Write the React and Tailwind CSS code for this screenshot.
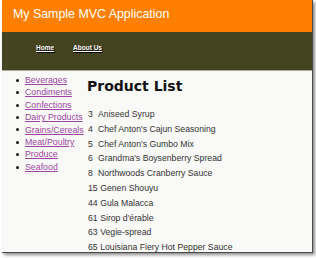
const categories = [
  "Beverages",
  "Condiments",
  "Confections",
  "Dairy Products",
  "Grains/Cereals",
  "Meat/Poultry",
  "Produce",
  "Seafood",
];

const products = [
  [3, "Aniseed Syrup"],
  [4, "Chef Anton's Cajun Seasoning"],
  [5, "Chef Anton's Gumbo Mix"],
  [6, "Grandma's Boysenberry Spread"],
  [8, "Northwoods Cranberry Sauce"],
  [15, "Genen Shouyu"],
  [44, "Gula Malacca"],
  [61, "Sirop d'érable"],
  [63, "Vegie-spread"],
  [65, "Louisiana Fiery Hot Pepper Sauce"],
];

export default function App() {
  return (
    <div className="w-[316px] h-[258px] bg-white overflow-hidden font-['Liberation_Sans',Arial,sans-serif]">
      <div className="ml-[2px] w-[311px] h-[253px] bg-[#f9f9f7] border-r border-b border-[#4a4a4a] shadow-[2px_2px_3px_rgba(0,0,0,0.45)] overflow-hidden">
        {/* header */}
        <div className="h-[32px] bg-[#ff7f00] pl-[11px] pt-[7px]">
          <h1 className="text-white text-[12.4px] leading-[14px]">
            My Sample MVC Application
          </h1>
        </div>

        {/* nav */}
        <div className="h-[39px] bg-[#444420] border-b border-[#a8a898] pl-[34px] pt-[12px] flex gap-[19px]">
          <a className="text-white font-bold text-[6.5px] leading-[8px] underline [text-shadow:1px_1px_1px_#000]">
            Home
          </a>
          <a className="text-white font-bold text-[6.5px] leading-[8px] underline [text-shadow:1px_1px_1px_#000]">
            About Us
          </a>
        </div>

        <div className="flex">
          {/* sidebar */}
          <ul className="w-[85px] shrink-0 pl-[14px] pt-[3px] text-[8.8px] leading-[12.4px]">
            {categories.map((c) => (
              <li key={c} className="flex items-center gap-[6px]">
                <span className="w-[3px] h-[3px] rounded-full bg-[#111] shrink-0" />
                <a className="text-[#9b45a0] underline whitespace-nowrap">{c}</a>
              </li>
            ))}
          </ul>

          {/* main */}
          <div className="flex-1">
            <h2 className="mt-[6px] text-[14px] leading-[18px] font-bold text-[#111] font-['DejaVu_Sans',sans-serif]">
              Product List
            </h2>
            <div className="mt-[12px] pl-[1px] text-[8.7px] leading-[14.8px] text-[#333]">
              {products.map(([id, name]) => (
                <div key={id} className="flex gap-[2.5px] whitespace-nowrap">
                  <span className="min-w-[7.5px]">{id}</span>
                  <span>{name}</span>
                </div>
              ))}
            </div>
          </div>
        </div>
      </div>
    </div>
  );
}
